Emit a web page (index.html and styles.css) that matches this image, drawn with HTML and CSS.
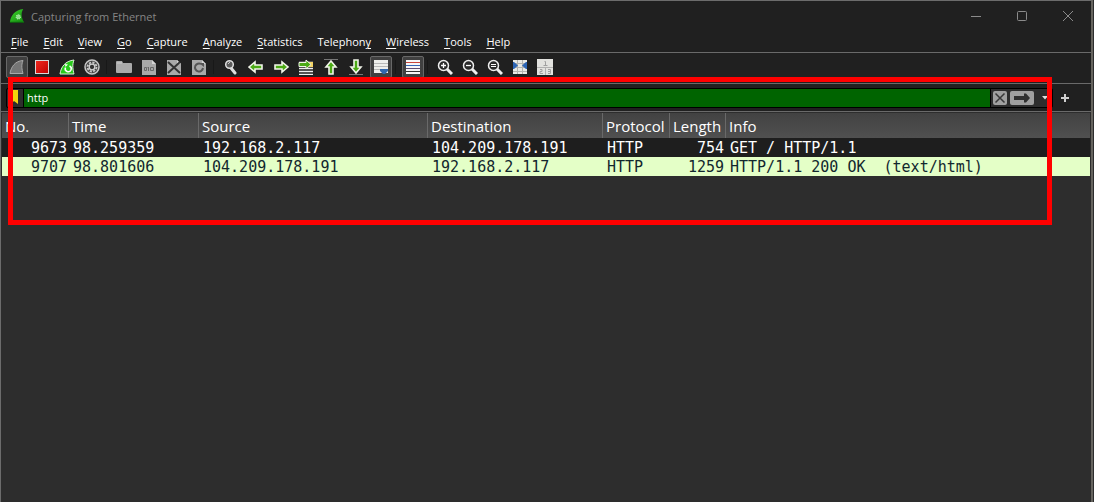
FILE: index.html
```html
<!DOCTYPE html>
<html lang="en">
<head>
<meta charset="utf-8">
<title>Capturing from Ethernet</title>
<link rel="stylesheet" href="styles.css">
</head>
<body>
<svg class="defs" aria-hidden="true">
  <defs>
    <linearGradient id="green" x1="0" y1="0" x2="1" y2="1"><stop offset="0" stop-color="#3fd42c"/><stop offset="1" stop-color="#128a10"/></linearGradient>
    <linearGradient id="red" x1="0" y1="0" x2="1" y2="1"><stop offset="0" stop-color="#f02a20"/><stop offset="1" stop-color="#c00000"/></linearGradient>
    <g id="page"><path d="M1 1h10l4 4v11H1z" fill="#a9a9a9"/><path d="M11 1v4h4z" fill="#d6d6d6"/></g>
    <g id="lens"><path d="M10 10l5 5" stroke="#eee" stroke-width="3"/><circle cx="6.500" cy="6.500" r="5" fill="#2b2b2b" stroke="#eee" stroke-width="1.500"/></g>
    <path id="arrow" d="M1 8l6-5v3h7v4H7v3z" fill="#4caa16" stroke="#f2f5e9" stroke-width="1.600"/>
  </defs>
</svg>
<div class="window">
  <header class="titlebar">
    <svg class="logo" viewBox="0 0 18 18"><path d="M1 16C2 8 7 2 16 1c-3 5-2 10 1 15z" fill="url(#green)"/><path d="M1 16h16" stroke="#0b6b0b"/><circle cx="10.500" cy="10" r="2.500" fill="#8fe08a" stroke="#d5f5d0" stroke-dasharray="1 1"/></svg>
    <h1 class="title">Capturing from Ethernet</h1>
    <div class="controls">
      <button class="control" aria-label="Minimize"><svg viewBox="0 0 12 12"><path d="M1 6.500h10"/></svg></button>
      <button class="control" aria-label="Maximize"><svg viewBox="0 0 12 12"><rect x="1.500" y="1.500" width="9" height="9" rx="1"/></svg></button>
      <button class="control" aria-label="Close"><svg viewBox="0 0 12 12"><path d="M1 1l10 10M11 1L1 11"/></svg></button>
    </div>
  </header>
  <nav class="menubar">
    <button class="menu"><u>F</u>ile</button>
    <button class="menu"><u>E</u>dit</button>
    <button class="menu"><u>V</u>iew</button>
    <button class="menu"><u>G</u>o</button>
    <button class="menu"><u>C</u>apture</button>
    <button class="menu"><u>A</u>nalyze</button>
    <button class="menu"><u>S</u>tatistics</button>
    <button class="menu">Telephon<u>y</u></button>
    <button class="menu"><u>W</u>ireless</button>
    <button class="menu"><u>T</u>ools</button>
    <button class="menu"><u>H</u>elp</button>
  </nav>
  <div class="toolbar">
    <button class="tool pressed" aria-label="Start capture"><svg viewBox="0 0 16 16"><path d="M1 14.500C2 8 6 2 14 1.500c-2 5-1 9 0 13z" fill="#767676" stroke="#a8a8a8"/></svg></button>
    <button class="tool" aria-label="Stop capture"><svg viewBox="0 0 16 16"><rect x="1.500" y="1.500" width="13" height="13" fill="url(#red)" stroke="#d8d8d8"/></svg></button>
    <button class="tool" aria-label="Restart capture"><svg viewBox="0 0 16 16"><path d="M1 15C2 8 6 2 15 1c-2 5-1 10 0 14z" fill="#27c91b" stroke="#d9f5d4"/><path d="M6.500 8.500a3 3 0 1 0 4-1.500" fill="none" stroke="#fff" stroke-width="1.500"/><path d="M6 5l3 .5L6.500 8z" fill="#fff"/></svg></button>
    <button class="tool" aria-label="Capture options"><svg viewBox="0 0 16 16"><circle cx="8" cy="8" r="7" fill="#454545" stroke="#c8c8c8" stroke-width="1.500"/><circle cx="8" cy="8" r="4.500" fill="none" stroke="#c8c8c8" stroke-width="1.800" stroke-dasharray="2.200 1.300"/><circle cx="8" cy="8" r="2.800" fill="#333" stroke="#d0d0d0" stroke-width="1.300"/></svg></button>
    <span class="separator"></span>
    <button class="tool" aria-label="Open file"><svg viewBox="0 0 16 16"><path d="M0 3q0-1 1-1h5l1 2h8q1 0 1 1v8q0 1-1 1H1q-1 0-1-1z" fill="#aaa"/><path d="M1 4h5" stroke="#ccc"/></svg></button>
    <button class="tool" aria-label="Save file"><svg viewBox="0 0 16 16"><use href="#page"/><path d="M3.500 8.500h2v3h-2zM7.500 8v4M6.500 8.500h1M9.500 8.500h3v3h-3z" fill="none" stroke="#686868"/></svg></button>
    <button class="tool" aria-label="Close file"><svg viewBox="0 0 16 16"><use href="#page"/><path d="M2 3l12 11M14 3L2 14" stroke="#333" stroke-width="2"/></svg></button>
    <button class="tool" aria-label="Reload file"><svg viewBox="0 0 16 16"><use href="#page"/><path d="M12 9a4 4 0 1 1-2-4" fill="none" stroke="#555" stroke-width="2"/><path d="M8 4h5v4z" fill="#555"/></svg></button>
    <span class="separator"></span>
    <button class="tool" aria-label="Find packet"><svg viewBox="0 0 16 16"><path d="M8 9l4 5" stroke="#ddd" stroke-width="3" stroke-linecap="round"/><circle cx="6.500" cy="5.500" r="3.800" fill="#5b5b5b" stroke="#ddd" stroke-width="1.500"/><path d="M5 5l2-2" stroke="#ccc"/></svg></button>
    <button class="tool" aria-label="Previous packet"><svg viewBox="0 0 16 16"><use href="#arrow"/></svg></button>
    <button class="tool" aria-label="Next packet"><svg viewBox="0 0 16 16"><use href="#arrow" transform="rotate(180 8 8)"/></svg></button>
    <button class="tool" aria-label="Go to packet"><svg viewBox="0 0 16 16"><path d="M1 3.500h14M1 9.500h14M1 12.500h14M1 15.500h14" stroke="#eee" stroke-width="1.500"/><path d="M11 3h4v5h-4z" fill="#f3d467"/><path d="M13 5.500L8 1v2.500H1v4h7V10z" fill="#4caa16" stroke="#f2f5e9"/></svg></button>
    <button class="tool" aria-label="First packet"><svg viewBox="0 0 16 16"><path d="M1 .5h14" stroke="#777"/><use href="#arrow" transform="rotate(90 8 8) translate(1 0)"/></svg></button>
    <button class="tool" aria-label="Last packet"><svg viewBox="0 0 16 16"><path d="M1 15.500h14" stroke="#777"/><use href="#arrow" transform="rotate(-90 8 8) translate(1 0)"/></svg></button>
    <button class="tool pressed" aria-label="Auto scroll"><svg viewBox="0 0 16 16"><path d="M1 1h14v13H1z" fill="#efefec"/><path d="M1 4.500h14M1 7.500h14M1 10.500h14" stroke="#b9b9b9"/><path d="M7 10h8v2l-3 3h-2l-3-3z" fill="#3167ad"/></svg></button>
    <span class="separator"></span>
    <button class="tool pressed" aria-label="Colorize"><svg viewBox="0 0 16 16"><path d="M1 1h14v14H1z" fill="#f6f6f6"/><path d="M1 3.500h14" stroke="#c9463a"/><path d="M1 6.500h14" stroke="#3365b5"/><path d="M1 9.500h14" stroke="#5a4b72"/><path d="M1 12.500h14" stroke="#333"/></svg></button>
    <span class="separator"></span>
    <button class="tool" aria-label="Zoom in"><svg viewBox="0 0 16 16"><use href="#lens"/><path d="M4 6.500h5M6.500 4v5" stroke="#fff" stroke-width="1.300"/></svg></button>
    <button class="tool" aria-label="Zoom out"><svg viewBox="0 0 16 16"><use href="#lens"/><path d="M4 6.500h5" stroke="#fff" stroke-width="1.300"/></svg></button>
    <button class="tool" aria-label="Normal size"><svg viewBox="0 0 16 16"><use href="#lens"/><path d="M4 5.500h5M4 7.500h5" stroke="#fff"/></svg></button>
    <button class="tool" aria-label="Resize columns"><svg viewBox="0 0 16 16"><path d="M1 1h14v14H1z" fill="#eaeae6"/><path d="M1 4.500h14M1 8.500h14M1 12.500h14M5.500 1v14M10.500 1v14" stroke="#b4b4b0"/><path d="M1 3h1l4 3.500L2 10H1zM15 3h-1l-4 3.500 4 3.500h1z" fill="#2e66b5"/></svg></button>
    <button class="tool" aria-label="Reset layout"><svg viewBox="0 0 16 16"><path d="M0 0h16v16H0z" fill="#e2e2df"/><path d="M0 8.500h16M8.500 8v8" stroke="#b0b0b0"/><path d="M7.500 2.500h1v4M6.500 6.500h4M3 10.500h2v2H3v2h3M11 10.500h2.500v4H11M11 12.500h2" fill="none" stroke="#a0a0a0"/></svg></button>
  </div>
  <div class="filterbar">
    <div class="filter">
      <button class="bookmark" aria-label="Saved filters"><svg viewBox="0 0 12 15"><path d="M1 0h9v14l-4-3-3 3H1z" fill="#f2d40c"/></svg></button>
      <input class="filter-text" type="text" aria-label="Display filter" value="http" spellcheck="false">
      <button class="clear" aria-label="Clear filter"><svg viewBox="0 0 14 14"><path d="M2.500 2.500l9 9M11.500 2.500l-9 9" stroke="#383838" stroke-width="1.500"/></svg></button>
      <button class="apply" aria-label="Apply filter"><svg viewBox="0 0 24 14"><path d="M4 5h10V2.500h2L20 7l-4 4.500h-2V9H4z" fill="#303030"/></svg></button>
      <button class="recent" aria-label="Recent filters"><svg viewBox="0 0 6 4"><path d="M0 0h6L3 3.500z" fill="#ddd"/></svg></button>
    </div>
    <button class="add" aria-label="Add filter button"><svg viewBox="0 0 8 8"><path d="M4 0v8M0 4h8" stroke="#d0d0d0" stroke-width="2"/></svg></button>
  </div>
  <main class="packets">
    <table class="packet-list">
      <colgroup><col class="c-no"><col class="c-time"><col class="c-source"><col class="c-dest"><col class="c-protocol"><col class="c-length"><col></colgroup>
      <thead><tr><th>No.</th><th>Time</th><th>Source</th><th>Destination</th><th>Protocol</th><th>Length</th><th>Info</th></tr></thead>
      <tbody>
        <tr class="selected"><td class="num">9673</td><td>98.259359</td><td>192.168.2.117</td><td>104.209.178.191</td><td>HTTP</td><td class="num">754</td><td>GET / HTTP/1.1</td></tr>
        <tr class="http"><td class="num">9707</td><td>98.801606</td><td>104.209.178.191</td><td>192.168.2.117</td><td>HTTP</td><td class="num">1259</td><td>HTTP/1.1 200 OK  (text/html)</td></tr>
      </tbody>
    </table>
  </main>
  <div class="highlight"></div>
</div>
</body>
</html>
```
FILE: styles.css
```css
* { box-sizing: border-box; }

body {
  margin: 0;
  background: #2d2d2d;
  color: #fff;
  font-family: "Open Sans", "Noto Sans", sans-serif;
  font-size: 11px;
}

button {
  margin: 0;
  padding: 0;
  border: 0;
  background: none;
  color: inherit;
  font: inherit;
}

svg { display: block; }

.defs { position: absolute; width: 0; height: 0; }

.window {
  position: relative;
  display: flex;
  flex-direction: column;
  min-height: 100vh;
  border: 1px solid #6c6c6c;
  border-right: 2px solid #66645f;
  border-bottom: 0;
  margin-right: 1px;
  background: #202020;
}

.titlebar { display: flex; align-items: center; height: 30px; padding-left: 8px; }
.logo { width: 16px; height: 16px; margin-right: 6px; }
.title { flex: 1; margin: 0; color: #858585; font-size: 11px; font-weight: 400; }
.controls { display: flex; }
.control { display: flex; align-items: center; justify-content: center; width: 46px; height: 29px; }
.control svg { width: 12px; height: 12px; fill: none; stroke: #8b8b8b; }

.menubar { display: flex; gap: 15px; height: 22px; padding-left: 10px; border-bottom: 1px solid #6a6a6a; }
.menu { height: 22px; line-height: 22px; }
.menu u { text-underline-offset: 2px; }

.toolbar {
  display: flex;
  align-items: center;
  gap: 3px;
  height: 31px;
  padding: 0 5px 2px;
  border-bottom: 1px solid #6a6a6a;
}
.tool {
  display: flex;
  align-items: center;
  justify-content: center;
  width: 22px;
  height: 22px;
  border: 1px solid transparent;
  border-radius: 2px;
}
.tool svg { width: 16px; height: 16px; }
.pressed { border-color: #686868; background: #404040; }
.separator { width: 4px; height: 14px; border-left: 1px solid #181818; }

.filterbar {
  display: flex;
  align-items: center;
  gap: 8px;
  height: 28px;
  padding: 0 22px 0 5px;
  border-bottom: 1px solid #6a6a6a;
}
.filter { display: flex; flex: 1; align-items: center; height: 20px; border: 1px solid #000; border-radius: 2px; background: #2d2d2d; }
.bookmark { width: 16px; padding-left: 1px; }
.bookmark svg { width: 12px; height: 15px; }
.filter-text {
  flex: 1;
  min-width: 0;
  height: 18px;
  padding: 0 3px;
  border: 0;
  border-right: 1px solid #000;
  border-left: 1px solid #000;
  outline: 0;
  background: #006400;
  color: #fff;
  font: inherit;
}
.clear, .apply { height: 14px; margin-left: 2px; border-radius: 2px; background: #a0a0a0; }
.clear { width: 14px; }
.apply { width: 24px; margin-left: 3px; }
.recent { width: 18px; padding-left: 8px; }
.recent svg { width: 6px; height: 4px; }
.add svg { width: 8px; height: 8px; }

.packets { flex: 1; padding: 1px 1px 0; background: #2d2d2d; }
.packet-list { width: 100%; table-layout: fixed; border-collapse: separate; border-spacing: 0; }
.c-no { width: 67px; }
.c-time { width: 130px; }
.c-source { width: 229px; }
.c-dest { width: 175px; }
.c-protocol { width: 67px; }
.c-length { width: 56px; }
th, td { overflow: hidden; padding: 2px 2px 0 4px; text-align: left; white-space: pre; }
th {
  height: 25px;
  padding: 1px 0 0 3px;
  border-right: 1px solid #696969;
  background: linear-gradient(#424242, #505050);
  font-size: 15px;
  font-weight: 400;
  line-height: 24px;
}
th:last-child { border-right: 0; }
td { height: 19px; font-family: "DejaVu Sans Mono", monospace; font-size: 15px; line-height: 17px; }
td.num { padding: 2px 2px 0 0; text-align: right; }
.selected { background: #1e1e1e; }
.http { background: #e4ffc7; color: #12272e; }

/* Annotation frame drawn over the capture */
.highlight {
  position: absolute;
  top: 76px;
  right: 39px;
  left: 7px;
  height: 148px;
  border: 5px solid #f00;
  pointer-events: none;
}
```
